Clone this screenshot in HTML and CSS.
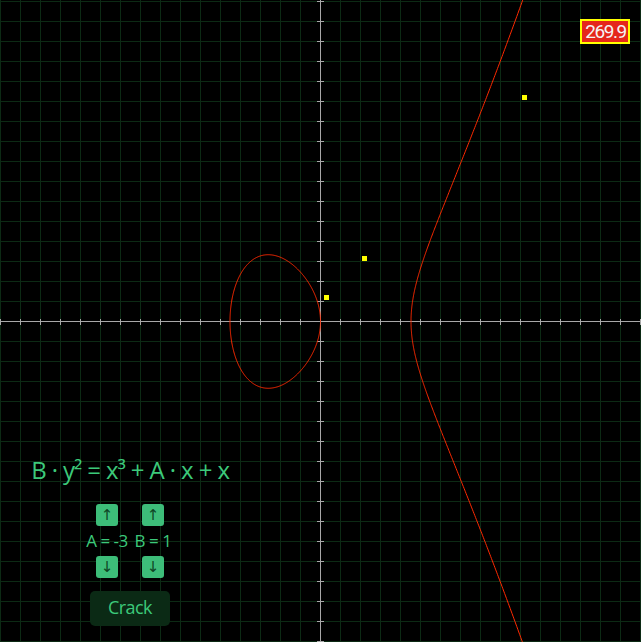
FILE: index.html
```html
<!DOCTYPE html>
<html>
<head>
<meta charset="utf-8">
<link rel="stylesheet" href="styles.css">
</head>
<body>
<div class="stage">
  <svg class="plot" id="plot" width="641" height="642" viewBox="0 0 641 642">
    <path id="ticks" class="ticks" d=""></path>
    <line class="axis" x1="320.5" y1="0" x2="320.5" y2="642"></line>
    <line class="axis" x1="0" y1="321.5" x2="641" y2="321.5"></line>
    <path id="curve" class="curve" d=""></path>
    <rect class="pt" x="324" y="295" width="5" height="5"></rect>
    <rect class="pt" x="362" y="256" width="5" height="5"></rect>
    <rect class="pt" x="522" y="95" width="5" height="5"></rect>
  </svg>

  <div class="score">269.9</div>

  <div class="panel">
    <div class="equation">B · y² = x³ + A · x + x</div>
    <div class="params">
      <div class="param">
        <button class="step">↑</button>
        <div class="label">A = -3</div>
        <button class="step">↓</button>
      </div>
      <div class="param">
        <button class="step">↑</button>
        <div class="label">B = 1</div>
        <button class="step">↓</button>
      </div>
    </div>
    <button class="crack">Crack</button>
  </div>
</div>
<script src="plot.js"></script>
</body>
</html>
```

FILE: styles.css
```css
html, body {
  margin: 0;
  padding: 0;
  background: #000;
}

.stage {
  position: relative;
  width: 641px;
  height: 642px;
  overflow: hidden;
  background-color: #000;
  background-image:
    linear-gradient(to right, #0c2a14 1px, transparent 1px),
    linear-gradient(to bottom, #0c2a14 1px, transparent 1px);
  background-size: 20px 20px;
  background-position: 0 1px;
  font-family: "Open Sans", "DejaVu Sans", sans-serif;
}

.plot {
  display: block;
}

.axis {
  stroke: #a8a8a8;
  stroke-width: 1;
  shape-rendering: crispEdges;
}

.ticks {
  stroke: #a8a8a8;
  stroke-width: 1;
  fill: none;
  shape-rendering: crispEdges;
}

.curve {
  fill: none;
  stroke: #ff2a00;
  stroke-width: 1;
}

.pt {
  fill: #ffff00;
}

.score {
  position: absolute;
  left: 580px;
  top: 19px;
  width: 46px;
  height: 21px;
  border: 2px solid #ffff00;
  background: #e5261b;
  color: #f4f4f4;
  font-family: Roboto, "Open Sans", sans-serif;
  font-size: 19px;
  letter-spacing: -1.4px;
  line-height: 22px;
  text-align: center;
  text-indent: 1px;
}

.panel {
  position: absolute;
  left: 30px;
  top: 456px;
  width: 200px;
  display: flex;
  flex-direction: column;
  align-items: center;
  color: #3cc97a;
}

.equation {
  font-size: 24px;
  letter-spacing: -1.2px;
  word-spacing: 1.2px;
  line-height: 28px;
  white-space: nowrap;
}

.params {
  display: grid;
  grid-template-columns: 42px 42px;
  column-gap: 4px;
  margin-top: 20px;
}

.param {
  display: flex;
  flex-direction: column;
  align-items: center;
  gap: 3px;
}

.label {
  font-size: 17px;
  letter-spacing: -0.5px;
  line-height: 24px;
  white-space: nowrap;
}

.step {
  width: 22px;
  height: 22px;
  padding: 0;
  border: none;
  border-radius: 3px;
  background: #3dbd79;
  color: #0d4424;
  font-family: "DejaVu Sans", sans-serif;
  font-size: 15px;
  line-height: 22px;
}

.crack {
  margin-top: 13px;
  width: 80px;
  height: 35px;
  padding: 0 0 3px;
  border: none;
  border-radius: 5px;
  background: #0b2a15;
  color: #3cc97a;
  font-family: "Open Sans", sans-serif;
  font-size: 18px;
  letter-spacing: -0.6px;
}
```

FILE: plot.js
```js
(function () {
  var A = -3, B = 1;
  var ox = 320.5, oy = 321.5, s = 64;
  var W = 641, H = 642;

  // ticks on axes at every grid line
  var t = "";
  for (var y = 1; y <= H; y += 20) {
    if (y === 321) continue;
    t += "M317 " + (y + 0.5) + "h7";
  }
  for (var x = 0; x <= W; x += 20) {
    if (x === 320) continue;
    t += "M" + (x + 0.5) + " 319v6";
  }
  document.getElementById("ticks").setAttribute("d", t);

  function f(x) { return (x * x * x + A * x + x) / B; }
  function X(x) { return (ox + s * x).toFixed(2); }
  function Y(y) { return (oy - s * y).toFixed(2); }

  var c = A + 1;
  var r = Math.sqrt(-c);
  var d = "";
  var n = 240, i, xx, yy;

  // oval between -r and 0
  var up = [], dn = [];
  for (i = 0; i <= n; i++) {
    xx = -r + r * (1 - Math.cos(Math.PI * i / n)) / 2;
    yy = Math.sqrt(Math.max(0, f(xx)));
    up.push([xx, yy]);
    dn.push([xx, -yy]);
  }
  d += "M" + X(up[0][0]) + " " + Y(up[0][1]);
  for (i = 1; i < up.length; i++) d += "L" + X(up[i][0]) + " " + Y(up[i][1]);
  for (i = dn.length - 1; i >= 0; i--) d += "L" + X(dn[i][0]) + " " + Y(dn[i][1]);
  d += "Z";

  // unbounded branch from r
  var xmax = 3.4;
  var pts = [];
  for (i = 0; i <= n; i++) {
    var u = i / n;
    xx = r + (xmax - r) * u * u;
    yy = Math.sqrt(Math.max(0, f(xx)));
    pts.push([xx, yy]);
  }
  d += "M" + X(pts[n][0]) + " " + Y(pts[n][1]);
  for (i = n - 1; i >= 0; i--) d += "L" + X(pts[i][0]) + " " + Y(pts[i][1]);
  for (i = 1; i <= n; i++) d += "L" + X(pts[i][0]) + " " + Y(-pts[i][1]);

  document.getElementById("curve").setAttribute("d", d);
})();
```
